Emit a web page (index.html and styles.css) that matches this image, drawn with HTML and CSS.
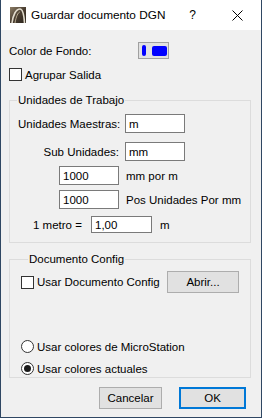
FILE: index.html
```html
<!DOCTYPE html>
<html lang="es">

<head>
    <meta charset="UTF-8">
    <meta name="viewport" content="width=device-width, initial-scale=1.0">
    <title>Guardar documento DGN</title>
    <link rel="stylesheet" href="styles.css">
</head>

<body>
    <div class="window">
        <!-- Barra de titulo -->
        <div class="titlebar">
            <svg class="app-icon" width="16" height="16" viewBox="0 0 16 16">
                <defs>
                    <linearGradient id="ig" x1="0" y1="0" x2="1" y2="1">
                        <stop offset="0" stop-color="#8c7d66" />
                        <stop offset="0.5" stop-color="#4a3e31" />
                        <stop offset="1" stop-color="#2a231b" />
                    </linearGradient>
                </defs>
                <rect x="0" y="0" width="16" height="16" fill="url(#ig)" />
                <path d="M2 16 C3 8, 6 2, 10 2 C13 2, 14 8, 14.5 16" fill="none" stroke="#e2dccd" stroke-width="1.6" />
                <path d="M5 16 C6 10, 8 5, 10 5" fill="none" stroke="#b5a88f" stroke-width="1" />
            </svg>
            <span class="title">Guardar documento DGN</span>
            <span class="help">?</span>
            <svg class="close" width="11" height="11" viewBox="0 0 11 11">
                <path d="M0.5 0.5 L10.5 10.5 M10.5 0.5 L0.5 10.5" stroke="#000" stroke-width="1" />
            </svg>
        </div>

        <div class="content">
            <!-- Color de fondo -->
            <div class="color-row">
                <span class="color-label">Color de Fondo:</span>
                <span class="color-btn"><i class="bar"></i><i class="swatch"></i></span>
            </div>

            <div class="check-row agrupar">
                <span class="checkbox"></span>
                <span>Agrupar Salida</span>
            </div>

            <!-- Unidades de Trabajo -->
            <fieldset class="group unidades">
                <legend>Unidades de Trabajo</legend>

                <div class="row row-a">
                    <span class="field-label">Unidades Maestras:</span>
                    <input type="text" class="field" value="m">
                </div>

                <div class="row row-b">
                    <span class="field-label">Sub Unidades:</span>
                    <input type="text" class="field" value="mm">
                </div>

                <div class="row row-c">
                    <input type="text" class="field" value="1000">
                    <span class="unit">mm por m</span>
                </div>

                <div class="row row-d">
                    <input type="text" class="field" value="1000">
                    <span class="unit">Pos Unidades Por mm</span>
                </div>

                <div class="row row-e">
                    <span class="metro-label">1 metro =</span>
                    <input type="text" class="field metro" value="1,00">
                    <span class="unit unit-m">m</span>
                </div>
            </fieldset>

            <!-- Documento Config -->
            <fieldset class="group documento">
                <legend>Documento Config</legend>

                <div class="check-row doc-row">
                    <span class="checkbox"></span>
                    <span>Usar Documento Config</span>
                    <button class="btn abrir">Abrir...</button>
                </div>

                <div class="radio-row first">
                    <span class="radio"></span>
                    <span>Usar colores de MicroStation</span>
                </div>
                <div class="radio-row">
                    <span class="radio checked"></span>
                    <span>Usar colores actuales</span>
                </div>
            </fieldset>

            <div class="footer">
                <button class="btn cancel">Cancelar</button>
                <button class="btn ok">OK</button>
            </div>
        </div>
    </div>
</body>

</html>
```

FILE: styles.css
```css
body {
    margin: 0;
    padding: 0;
    font-family: "Liberation Sans", Arial, sans-serif;
    font-size: 11.5px;
    color: #000;
}

.window {
    box-sizing: border-box;
    width: 262px;
    height: 418px;
    background-color: #f0f0f0;
    border: 1px solid #2f4763;
    border-top: none;
}

/* Titelleiste */
.titlebar {
    display: flex;
    align-items: center;
    height: 30px;
    background-color: #fff;
    padding-left: 9px;
}

.app-icon {
    display: block;
    flex: none;
}

.title {
    margin-left: 5px;
    font-size: 11.8px;
}

.help {
    margin-left: auto;
    margin-right: 36px;
    font-size: 12px;
}

.close {
    display: block;
    margin-right: 18px;
}

.content {
    padding: 0 10px 0 8px;
}

/* Color de Fondo */
.color-row {
    display: flex;
    align-items: center;
    height: 17px;
    margin-top: 12px;
}

.color-label {
    width: 129px;
}

.color-btn {
    box-sizing: border-box;
    display: flex;
    align-items: center;
    width: 31px;
    height: 17px;
    border: 1px solid #a0a0a0;
    background-color: #e1e1e1;
    padding-left: 3px;
}

.color-btn .bar {
    width: 4px;
    height: 11px;
    border-radius: 2px;
    background-color: #0000ff;
}

.color-btn .swatch {
    width: 15px;
    height: 10px;
    margin-left: 6px;
    border-radius: 2px;
    background-color: #0000ff;
}

/* Checkboxen */
.check-row {
    display: flex;
    align-items: center;
    height: 13px;
}

.agrupar {
    margin-top: 9px;
}

.checkbox {
    box-sizing: border-box;
    width: 13px;
    height: 13px;
    margin-right: 3px;
    border: 1px solid #333;
    background-color: #fff;
    flex: none;
}

/* Gruppen */
.group {
    margin: 12px 0 0 0;
    padding: 0;
    border: 1px solid #dcdcdc;
    min-inline-size: 0;
}

.group legend {
    margin-left: 7px;
    padding: 0 1px;
    line-height: 14px;
}

.unidades {
    padding: 7px 0 9px 0;
}

.row {
    display: flex;
    align-items: center;
    height: 19px;
}

.row-b {
    margin-top: 9px;
}

.row-c {
    margin-top: 5px;
    padding-left: 49px;
}

.row-d {
    margin-top: 5px;
    padding-left: 49px;
}

.row-e {
    margin-top: 7px;
    padding-left: 23px;
    height: 17px;
}

.row-a,
.row-b {
    padding-left: 8px;
}

.field-label {
    width: 101px;
    text-align: right;
    white-space: nowrap;
    margin-right: 6px;
}

.field {
    box-sizing: border-box;
    width: 60px;
    height: 100%;
    margin: 0;
    padding: 0 0 0 3px;
    border: 1px solid #7a7a7a;
    background-color: #fff;
    font-family: inherit;
    font-size: 11.5px;
    color: #000;
    outline: none;
}

.field.metro {
    width: 61px;
}

.metro-label {
    width: 58px;
    white-space: nowrap;
}

.unit {
    margin-left: 7px;
    white-space: nowrap;
}

.unit-m {
    margin-left: 8px;
}

/* Documento Config */
.documento {
    margin-top: 9px;
    padding: 5px 11px 2px 11px;
}

.doc-row {
    height: 22px;
}

.radio-row {
    display: flex;
    align-items: center;
    height: 13px;
    margin-top: 9px;
}

.radio-row.first {
    margin-top: 47px;
}

.radio {
    box-sizing: border-box;
    display: flex;
    align-items: center;
    justify-content: center;
    width: 13px;
    height: 13px;
    margin-right: 3px;
    border: 1px solid #333;
    border-radius: 50%;
    background-color: #fff;
    flex: none;
}

.radio.checked::after {
    content: "";
    width: 7px;
    height: 7px;
    border-radius: 50%;
    background-color: #1a1a1a;
}

/* Buttons */
.btn {
    box-sizing: border-box;
    height: 22px;
    margin: 0;
    padding: 0;
    border: 1px solid #adadad;
    background-color: #e1e1e1;
    font-family: inherit;
    font-size: 11.5px;
    color: #000;
}

.abrir {
    width: 72px;
    margin-left: auto;
}

.footer {
    display: flex;
    justify-content: flex-end;
    margin-top: 9px;
    padding-right: 5px;
}

.cancel {
    width: 63px;
    margin-right: 17px;
}

.ok {
    width: 67px;
    border: 2px solid #0078d7;
}
```
